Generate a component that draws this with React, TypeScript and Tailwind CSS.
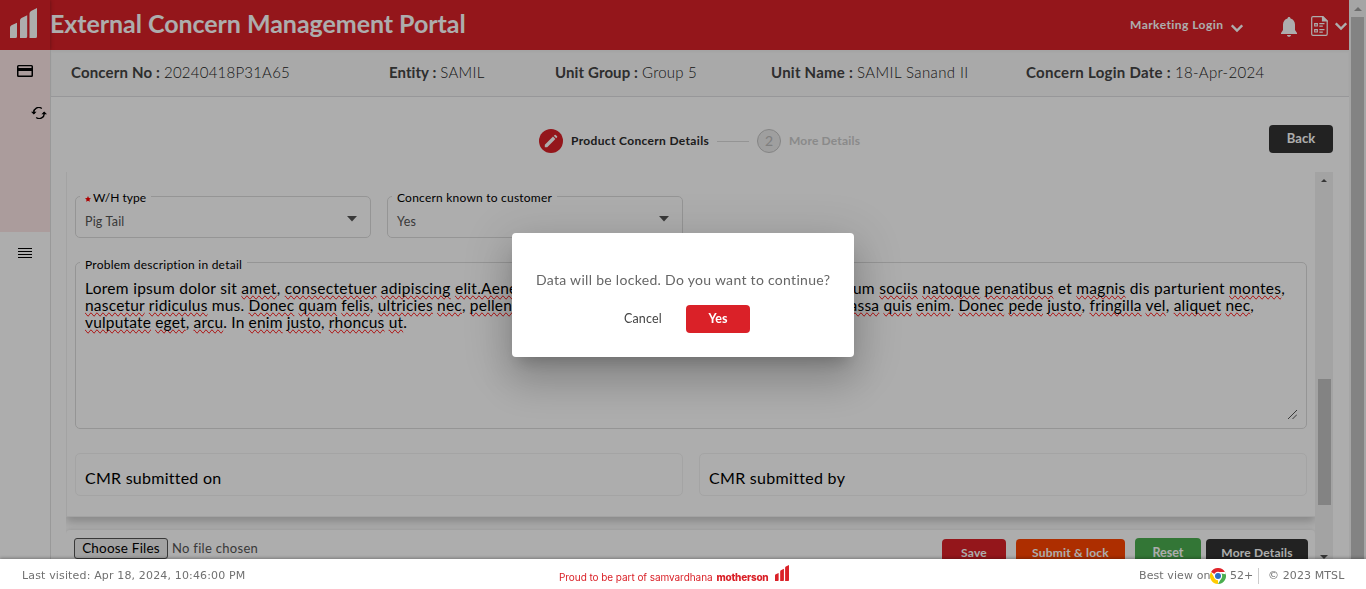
import type { ReactNode } from "react";

const PARAGRAPH = [
  {
    className: "tracking-[0.285px]",
    text: "Lorem ipsum dolor sit *amet, *consectetuer *adipiscing *elit.Aenean *commodo *ligula *eget dolor. *Aenean *massa. Cum *sociis *natoque *penatibus et *magnis dis parturient *montes,",
  },
  {
    className: "tracking-[0.21px]",
    text: "*nascetur *ridiculus mus. *Donec *quam *felis, *ultricies *nec, *pellentesque *eu, *pretium *quis, sem. *Nulla *consequat *massa *quis *enim. *Donec *pede *justo, *fringilla *vel, *aliquet *nec,",
  },
  {
    className: "tracking-[0.17px]",
    text: "*vulputate *eget, *arcu. In *enim *justo, *rhoncus *ut.",
  },
];

function Spelled({ text }: { text: string }) {
  return (
    <>
      {text.split(" ").map((word, i) => {
        const lead = i > 0 ? " " : "";
        if (!word.startsWith("*")) return lead + word;
        const match = word.slice(1).match(/^(.*?)([.,]?)$/)!;
        return (
          <span key={i}>
            {lead}
            <span className="[text-decoration-line:spelling-error]">{match[1]}</span>
            {match[2]}
          </span>
        );
      })}
    </>
  );
}

function Bars({ className }: { className: string }) {
  return (
    <svg viewBox="0 0 27 30" preserveAspectRatio="none" className={className} fill="currentColor">
      <path d="M0 19.500Q0 18 1.500 17.200L7 14.800V28.500Q7 30 5.500 30H0zM10 12.500Q10 10.800 11.500 10L17.200 7.200V28.500Q17.200 30 15.700 30H10zM19.500 5.500Q19.500 4 21 3L27 0V28.500Q27 30 25.500 30H19.500z" />
    </svg>
  );
}

function Chevron({ className }: { className: string }) {
  return (
    <svg viewBox="0 0 12 9" className={className} fill="none" stroke="currentColor" strokeWidth="2.3">
      <path d="M.8 1.300 6 6.500 11.200 1.300" />
    </svg>
  );
}

function InfoItem({ label, value, className, labelClass, valueClass }: { label: string; value: string; className: string; labelClass: string; valueClass: string }) {
  return (
    <div className={`flex shrink-0 gap-1 whitespace-nowrap ${className}`}>
      <span className={`font-bold ${labelClass}`}>{label}</span>
      <span className={`font-light text-[#1c1c1c] ${valueClass}`}>{value}</span>
    </div>
  );
}

function SelectField({ label, value }: { label: ReactNode; value: string }) {
  return (
    <fieldset className="h-[50px] w-[296px] rounded-[5px] border border-[#dcdcdc] pl-1">
      <legend className="h-[17px] px-[5px] pt-[3px] text-[12px] leading-[14px] text-black">{label}</legend>
      <div className="flex h-8 items-center justify-between pr-3 pl-[5px] text-[12.500px] text-[#555]">
        <span className="pt-0.5 tracking-[0.2px]">{value}</span>
        <svg viewBox="0 0 12 6" className="mb-1 h-1.5 w-3" fill="#555">
          <path d="M1 0H11L6 5.500z" />
        </svg>
      </div>
    </fieldset>
  );
}

function Header() {
  return (
    <header className="flex h-[50px] bg-[#da2128] text-white">
      <div className="w-[50px] shrink-0 pt-2 pl-2.5 shadow-[0_0_4px_rgba(0,0,0,0.35)]">
        <Bars className="h-[30px] w-[27px]" />
      </div>
      <h1 className="flex-1 pt-1.5 text-[25px] leading-[34px] font-bold tracking-[-0.05px] whitespace-nowrap">External Concern Management Portal</h1>
      <div className="flex">
        <span className="w-[101px] pt-[17px] text-[12px] leading-4 font-bold tracking-[0.45px] whitespace-nowrap">Marketing Login</span>
        <Chevron className="mt-6 h-[9px] w-3" />
        <svg viewBox="0 0 18 20" className="mt-[17px] ml-[37px] h-5 w-[18px]" fill="currentColor">
          <path d="M9 0c.9 0 1.500.6 1.500 1.600 2.800.7 4.500 3 4.500 6v5.400l2 3V17H1v-1l2-3V7.600c0-3 1.700-5.300 4.500-6C7.500.6 8.100 0 9 0zM7 18h4c0 1.100-.9 1.800-2 1.800S7 19.100 7 18z" />
        </svg>
        <svg viewBox="0 0 17 20" className="mt-4 ml-[13px] h-5 w-[17px]" fill="none" stroke="currentColor" strokeWidth="1.200">
          <path d="M2 .7H12L16.200 5V18Q16.200 19.300 15 19.300H2Q.7 19.300.7 18V2Q.7.7 2 .7z" />
          <path d="M11.500.7V5H16.200z" fill="currentColor" />
          <path d="M3.700 7.700h2.600v2.300H3.700zM3.700 13.700h2.600v2.300H3.700zM8.300 7.700h5.200M8.300 10.200h3.500M8.300 13.700h5.200M8.300 16.200h3.500" />
        </svg>
        <Chevron className="mt-[22px] mr-0.5 ml-[7px] h-[9px] w-3" />
      </div>
    </header>
  );
}

function Sidebar() {
  return (
    <nav className="flex w-[51px] shrink-0 flex-col border-r border-[#e2e2e2] text-black">
      <div className="h-[182px] bg-[#fde6e6]">
        <svg viewBox="0 0 16 12" className="mt-[15px] ml-[17px] h-3 w-4">
          <path d="M1.500 0h13Q16 0 16 1.500v9Q16 12 14.500 12h-13Q0 12 0 10.500v-9Q0 0 1.500 0zM1.500 1.300V3h13V1.300zM1.500 6v4.500h13V6z" fillRule="evenodd" />
        </svg>
        <svg viewBox="0 0 16 12" className="mt-[30px] ml-[31px] h-3 w-4" fill="none" stroke="currentColor" strokeWidth="1.400">
          <path d="M2.800 7V6A5 5 0 0 1 10.800 1.500M13.200 5V6A5 5 0 0 1 5.200 10.500" />
          <path d="M0 7.200 2.800 4.600 5.600 7.200zM10.400 4.800H16L13.200 7.400z" fill="currentColor" stroke="none" transform="matrix(1 0 0 -1 0 12)" />
        </svg>
      </div>
      <svg viewBox="0 0 14 11" className="mt-[15px] ml-[18px] h-[11px] w-3.5" stroke="currentColor" strokeWidth="1">
        <path d="M0 1.500H14M0 4.500H14M0 7.500H14M0 10.500H14" />
      </svg>
    </nav>
  );
}

function InfoBar() {
  return (
    <div className="flex h-[47px] shrink-0 items-center border-b border-[#dfdfe2] bg-[#f9f9f9] pb-0.5 pl-5 text-[15px] text-[#444] shadow-[inset_0_2px_2px_rgba(0,0,0,0.03)]">
      <InfoItem label="Concern No :" value="20240418P31A65" className="w-[318px]" labelClass="tracking-[0.16px]" valueClass="tracking-[0.22px]" />
      <InfoItem label="Entity :" value="SAMIL" className="w-[166px]" labelClass="tracking-[0.06px]" valueClass="tracking-[0.3px]" />
      <InfoItem label="Unit Group :" value="Group 5" className="w-[216px]" labelClass="tracking-[0.12px]" valueClass="tracking-[0.2px]" />
      <InfoItem label="Unit Name :" value="SAMIL Sanand II" className="w-[255px]" labelClass="tracking-[0.24px]" valueClass="tracking-[0.4px]" />
      <InfoItem label="Concern Login Date :" value="18-Apr-2024" className="" labelClass="tracking-[0.29px]" valueClass="tracking-[0.3px]" />
    </div>
  );
}

function Stepper() {
  return (
    <div className="flex h-[75px] shrink-0 items-center pt-[13px] pr-4 pl-[488px] text-[12px] font-bold whitespace-nowrap">
      <span className="flex size-6 items-center justify-center rounded-full bg-[#da2128] text-white">
        <svg viewBox="0 0 14 14" className="size-3.5" fill="currentColor">
          <path d="M.8 10.800 9 2.600 11.400 5 3.200 13.200H.8zM9.800 1.800 10.700.9Q11.200.5 11.700.9L13.100 2.300Q13.500 2.800 13.100 3.300L12.200 4.200z" />
        </svg>
      </span>
      <span className="ml-2 w-[138px] tracking-[0.34px] text-[#2c2c2c]">Product Concern Details</span>
      <span className="ml-2 h-px w-8 bg-[#dadada]" />
      <span className="ml-2 flex size-6 items-center justify-center rounded-full border border-[#c4c4c4] bg-[#eaeaea] pb-0.5 text-[14px] font-normal text-[#bbb]">2</span>
      <span className="ml-2 tracking-[0.18px] text-[#ccc]">More Details</span>
      <button className="mb-1 ml-auto h-7 w-16 rounded bg-[#333] text-[13px] text-white">Back</button>
    </div>
  );
}

function FormCard() {
  return (
    <section className="h-[345px] shrink-0 border-b border-l border-[#f0f0f0] bg-white pt-4 pl-2 shadow-[0_5px_9px_rgba(0,0,0,0.22)]">
      <div className="flex gap-4">
        <SelectField
          value="Pig Tail"
          label={
            <span className="flex items-center">
              <svg viewBox="0 0 10 10" className="mt-0.5 mr-0.5 size-1.5" fill="#f00">
                <path d="M5 0 6.500 3.300 10 3.700 7.400 6.100 8.100 9.700 5 7.900 1.900 9.700 2.600 6.100 0 3.700 3.500 3.300z" />
              </svg>
              W/H type
            </span>
          }
        />
        <SelectField value="Yes" label={<span className="tracking-[0.22px]">Concern known to customer</span>} />
      </div>
      <fieldset className="mt-4 h-[175px] w-[1232px] rounded-[5px] border border-[#dcdcdc] pl-1">
        <legend className="h-[17px] px-[5px] pt-1 text-[12px] leading-[14px] tracking-[0.24px] text-black">Problem description in detail</legend>
        <div className="flex h-[148px] flex-col justify-between pt-[9px] pr-[9px] pl-[5px] text-[15.500px] leading-[17px] text-black">
          <div>
            {PARAGRAPH.map((line) => (
              <p key={line.text} className={`whitespace-nowrap ${line.className}`}>
                <Spelled text={line.text} />
              </p>
            ))}
          </div>
          <svg viewBox="0 0 9 9" className="size-[9px] self-end" stroke="#555" strokeWidth="1">
            <path d="M0 9 9 0M4.500 9 9 4.500" />
          </svg>
        </div>
      </fieldset>
      <div className="mt-6 flex gap-4 text-[16px] text-black">
        <div className="flex h-[43px] w-[608px] items-center rounded-[5px] border border-[#f2f2f2] pt-1.5 pl-[9px] tracking-[0.25px]">CMR submitted on</div>
        <div className="flex h-[43px] w-[608px] items-center rounded-[5px] border border-[#f2f2f2] pt-1.5 pl-[9px] tracking-[0.3px]">CMR submitted by</div>
      </div>
    </section>
  );
}

function Actions() {
  return (
    <section className="flex h-20 shrink-0 items-start rounded-tl rounded-tr bg-white pt-2 pr-[7px] pl-2 text-[12px] font-bold whitespace-nowrap text-white shadow-[0_0_4px_rgba(0,0,0,0.15)]">
      <button className="h-[21px] w-[94px] rounded-[3px] border border-[#555] bg-[#efefef] text-[13.500px] leading-[19px] font-normal tracking-[0.2px] text-black">Choose Files</button>
      <span className="ml-1 flex-1 text-[13px] leading-[21px] font-normal tracking-[0.3px] text-[#555]">No file chosen</span>
      <button className="mt-px h-7 w-16 rounded bg-[#da2128] tracking-[0.2px]">Save</button>
      <button className="mt-px ml-2.5 h-7 w-[109px] rounded bg-[#ff4500] tracking-[0.2px]">Submit &amp; lock</button>
      <button className="ml-2.5 h-[30px] w-[66px] rounded bg-[#4caf50] text-[12.500px]">Reset</button>
      <button className="mt-px ml-[5px] h-7 w-[102px] rounded bg-[#333] tracking-[0.2px]">More Details</button>
    </section>
  );
}

function InnerScrollbar() {
  return (
    <div className="flex w-[18px] flex-col items-center bg-[#f1f1f1]">
      <svg viewBox="0 0 8 4" className="mt-[7px] h-1 w-2" fill="#505050">
        <path d="M0 4 4 0 8 4z" />
      </svg>
      <div className="mt-[197px] h-[126px] w-[13px] shrink-0 bg-[#c1c1c1]" />
      <svg viewBox="0 0 8 4" className="mt-[50px] h-1 w-2 shrink-0" fill="#505050">
        <path d="M0 0H8L4 4z" />
      </svg>
    </div>
  );
}

function PageScrollbar() {
  return (
    <div className="flex w-[17px] flex-col items-center bg-[#f4f4f4]">
      <svg viewBox="0 0 8 4" className="mt-[7px] h-1 w-2" fill="#a0a0a0">
        <path d="M0 4 4 0 8 4z" />
      </svg>
      <div className="mt-1.5 w-[13px] flex-1 bg-[#c1c1c1]" />
    </div>
  );
}

function ChromeIcon() {
  return (
    <svg viewBox="0 0 16 16" className="mb-0.5 size-4">
      <circle cx="8" cy="8" r="8" fill="#fff" />
      <path d="M8 8 1.070 4A8 8 0 0 1 14.930 4L8 4z" fill="#e0242b" />
      <path d="M14.930 4A8 8 0 0 1 8 16L11.460 10 8 4z" fill="#4bae4f" />
      <path d="M8 16A8 8 0 0 1 1.070 4L4.540 10 8 12z" fill="#fc0" />
      <path d="M14.930 4A8 8 0 0 1 15.800 6.300L11 5.500 8 4z" fill="#fff" />
      <circle cx="8" cy="8" r="4.200" fill="#fff" />
      <circle cx="8" cy="8" r="3" fill="#2a6fc4" />
    </svg>
  );
}

function Footer() {
  return (
    <footer className="z-20 flex h-[30px] shrink-0 items-center bg-white pr-[22px] pb-px pl-[22px] font-['DejaVu_Sans',sans-serif] text-[11px] whitespace-nowrap text-[#707070] shadow-[0_-1px_3px_rgba(0,0,0,0.3)]">
      <span className="w-[536px] pt-1.5 tracking-[0.15px]">Last visited: Apr 18, 2024, 10:46:00 PM</span>
      <div className="flex items-end font-['Inter',sans-serif] text-[10px] leading-3 text-[#da2128]">
        <span className="pl-px tracking-[-0.06px]">Proud to be part of samvardhana</span>
        <span className="ml-1 w-[55px] font-extrabold tracking-[-0.25px]">motherson</span>
        <Bars className="mb-0.5 ml-[3px] h-4 w-3.5" />
      </div>
      <div className="ml-auto flex items-center pt-1.5">
        <span className="w-[71px] tracking-[0.1px]">Best view on</span>
        <ChromeIcon />
        <span className="ml-1 w-6">52+</span>
        <span className="mb-0.5 ml-1 h-4 w-px bg-[#ccc]" />
        <span className="ml-[9px] w-[76px] tracking-[0.1px]">© 2023 MTSL</span>
      </div>
    </footer>
  );
}

function ConfirmDialog() {
  return (
    <div className="fixed inset-0 z-30 flex items-center justify-center pt-px">
      <div role="dialog" className="h-[124px] w-[342px] rounded bg-white px-6 pt-[37px] shadow-[0_11px_15px_-7px_rgba(0,0,0,0.2),0_24px_38px_3px_rgba(0,0,0,0.14),0_9px_46px_8px_rgba(0,0,0,0.12)]">
        <p className="text-[14px] leading-5 tracking-[0.3px] whitespace-nowrap text-[#666]">Data will be locked. Do you want to continue?</p>
        <div className="mt-[15px] flex pl-[72px] text-[12.500px]">
          <button className="h-7 w-[70px] pl-4 text-left tracking-[0.15px] text-[#444]">Cancel</button>
          <button className="ml-2 h-7 w-16 rounded bg-[#da2128] font-bold text-white">Yes</button>
        </div>
      </div>
    </div>
  );
}

export default function App() {
  return (
    <div className="flex h-[589px] w-[1366px] flex-col overflow-hidden bg-white font-['Lato',sans-serif]">
      <div className="flex min-h-0 flex-1 overflow-hidden">
        <div className="flex w-[1349px] flex-col">
          <Header />
          <div className="flex min-h-0 flex-1">
            <Sidebar />
            <main className="flex min-w-0 flex-1 flex-col">
              <InfoBar />
              <Stepper />
              <div className="ml-[15px] flex min-h-0 w-[1267px] flex-1 overflow-hidden">
                <div className="flex w-[1249px] flex-col gap-[13px]">
                  <FormCard />
                  <Actions />
                </div>
                <InnerScrollbar />
              </div>
            </main>
          </div>
        </div>
        <PageScrollbar />
      </div>
      <div className="fixed inset-0 z-10 bg-black/32" />
      <Footer />
      <ConfirmDialog />
    </div>
  );
}
